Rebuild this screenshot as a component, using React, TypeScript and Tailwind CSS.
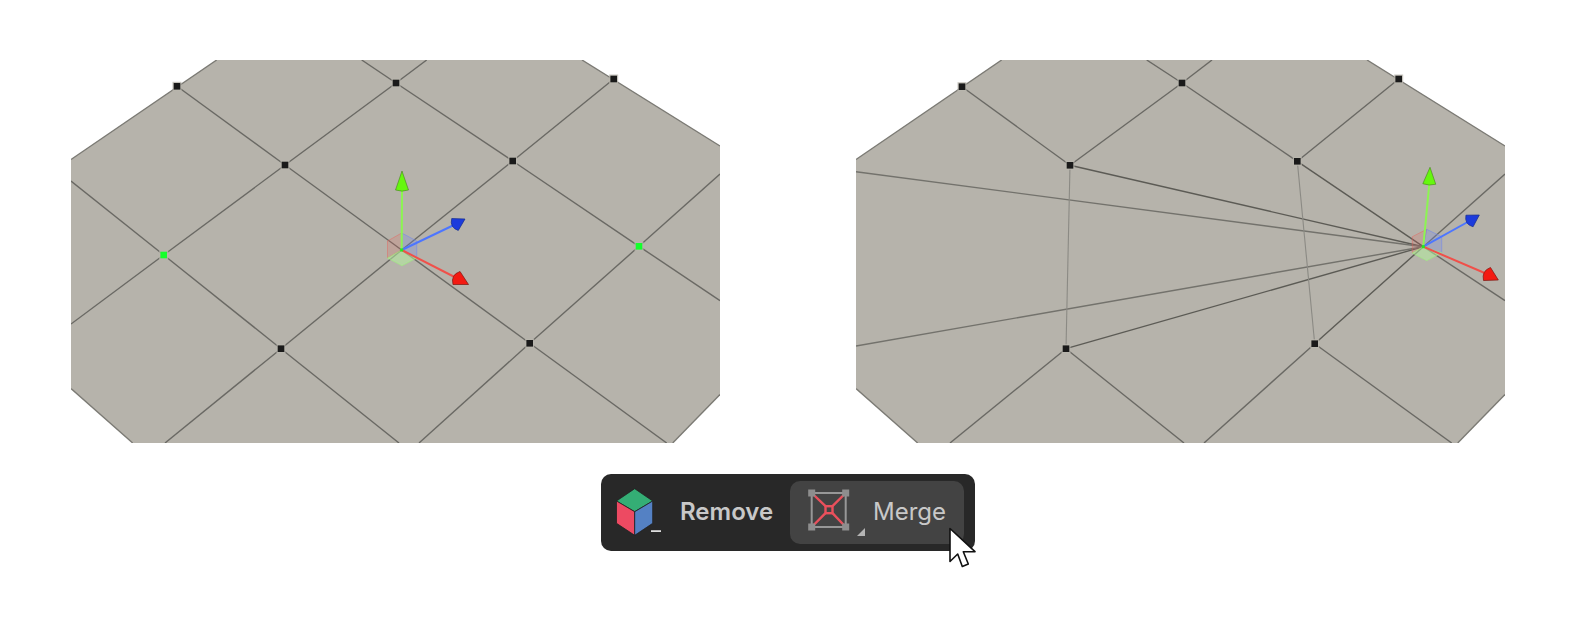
const EDGE = "#6a6964";

type Pt = [number, number];

function Edge({ a, b, color = EDGE, width = 1.4, opacity = 1 }: { a: Pt; b: Pt; color?: string; width?: number; opacity?: number }) {
  return <line x1={a[0]} y1={a[1]} x2={b[0]} y2={b[1]} stroke={color} strokeWidth={width} opacity={opacity} />;
}

function Vertex({ at, selected }: { at: Pt; selected?: boolean }) {
  return (
    <g>
      <rect x={at[0] - 4.5} y={at[1] - 4.5} width={9} height={9} fill="#b9b6ae" opacity={0.8} />
      <rect
        x={at[0] - 3.3}
        y={at[1] - 3.3}
        width={6.6}
        height={6.6}
        fill={selected ? "#14ff2c" : "#1a1a1a"}
      />
    </g>
  );
}

function Gizmo({
  origin,
  hex,
  green,
  blue,
  red,
}: {
  origin: Pt;
  hex: Pt[];
  green: { tip: Pt; base: Pt };
  blue: { tip: Pt; base: Pt };
  red: { tip: Pt; base: Pt };
}) {
  const [top, ul, ll, bottom, lr, ur] = hex;
  const quad = (pts: Pt[]) => pts.map((p) => p.join(",")).join(" ");
  const cone = (tip: Pt, base: Pt, r: number, bulge: number) => {
    const dx = tip[0] - base[0];
    const dy = tip[1] - base[1];
    const len = Math.hypot(dx, dy);
    const nx = (-dy / len) * r;
    const ny = (dx / len) * r;
    return `M${tip[0]} ${tip[1]} L${base[0] + nx} ${base[1] + ny} Q${base[0] - dx * bulge} ${base[1] - dy * bulge} ${base[0] - nx} ${base[1] - ny} Z`;
  };
  return (
    <g>
      <polygon points={quad([ul, top, origin, ll])} fill="#e8625c" fillOpacity={0.2} stroke="#e8625c" strokeOpacity={0.5} strokeWidth={0.9} />
      <polygon points={quad([top, ur, lr, origin])} fill="#6f86f0" fillOpacity={0.26} stroke="#6f86f0" strokeOpacity={0.6} strokeWidth={0.9} />
      <polygon points={quad([origin, lr, bottom, ll])} fill="#b4ee9e" fillOpacity={0.55} stroke="#9cf07c" strokeOpacity={0.7} strokeWidth={0.9} />
      <Edge a={origin} b={green.base} color="#8cf552" width={2} />
      <Edge a={origin} b={blue.base} color="#4d76ff" width={2} />
      <Edge a={origin} b={red.base} color="#f0504a" width={2} />
      <path d={cone(green.tip, green.base, 6.5, 0.12)} fill="#66f70f" stroke="#47801f" strokeWidth={0.6} />
      <path d={cone(blue.tip, blue.base, 6.8, 0.55)} fill="#1c3bdc" stroke="#122a8c" strokeWidth={0.7} />
      <path d={cone(red.tip, red.base, 7.4, 0.5)} fill="#f31a12" stroke="#7c1410" strokeWidth={0.7} />
      <rect x={origin[0] - 1.5} y={origin[1] - 1.5} width={3} height={3} fill="#25e81f" />
    </g>
  );
}

function MeshLeft() {
  const v1: Pt = [177, 86.3];
  const v2: Pt = [396, 83];
  const v3: Pt = [285, 165];
  const v4: Pt = [613.7, 79];
  const v5: Pt = [512.7, 161];
  const gl: Pt = [163.7, 255];
  const gr: Pt = [639, 246.3];
  const bl: Pt = [281, 348.7];
  const br: Pt = [529.7, 343.3];
  const c: Pt = [401.7, 250];
  return (
    <svg viewBox="71 60 649 383" className="block h-[383px] w-[649px] shrink-0">
      <polygon
        points="71,159.5 216.7,60 582,60 720,146 720,394.5 672.7,443 132.7,443 71,388.5"
        fill="#b6b3ab"
      />
      <Edge a={[71, 159.5]} b={[216.7, 60]} color="#7b7a74" />
      <Edge a={[582, 60]} b={[720, 146]} color="#7b7a74" />
      <Edge a={[720, 394.5]} b={[672.7, 443]} color="#7b7a74" />
      <Edge a={[132.7, 443]} b={[71, 388.5]} color="#7b7a74" />
      <Edge a={v1} b={v3} />
      <Edge a={v3} b={c} />
      <Edge a={c} b={br} />
      <Edge a={br} b={[666.7, 443]} />
      <Edge a={[361.7, 60]} b={v2} />
      <Edge a={v2} b={v5} />
      <Edge a={v5} b={gr} />
      <Edge a={gr} b={[720, 300.7]} />
      <Edge a={[71, 181]} b={gl} />
      <Edge a={gl} b={bl} />
      <Edge a={bl} b={[399, 443]} />
      <Edge a={[426.7, 60]} b={v2} />
      <Edge a={v2} b={v3} />
      <Edge a={v3} b={gl} />
      <Edge a={gl} b={[71, 324]} />
      <Edge a={v4} b={v5} />
      <Edge a={v5} b={c} />
      <Edge a={c} b={bl} />
      <Edge a={bl} b={[165, 443]} />
      <Edge a={[720, 174]} b={gr} />
      <Edge a={gr} b={br} />
      <Edge a={br} b={[419, 443]} />
      {[v1, v2, v3, v4, v5, bl, br].map((p) => (
        <Vertex key={p.join()} at={p} />
      ))}
      <Vertex at={gl} selected />
      <Vertex at={gr} selected />
      <Gizmo
        origin={c}
        hex={[[401.7, 233], [387.5, 241], [387.5, 258], [402, 265.7], [416.7, 258], [416.7, 241]]}
        green={{ tip: [402, 171], base: [402, 190] }}
        blue={{ tip: [465, 219], base: [455, 224.5] }}
        red={{ tip: [468.5, 284.5], base: [456.5, 278] }}
      />
    </svg>
  );
}

function MeshRight() {
  const v1: Pt = [962, 86.7];
  const v2: Pt = [1182, 83];
  const v3: Pt = [1070, 165.3];
  const v4: Pt = [1398.7, 79];
  const v5: Pt = [1297.3, 161.3];
  const bl: Pt = [1066, 348.7];
  const br: Pt = [1314.7, 343.7];
  const c: Pt = [1423.3, 246.7];
  return (
    <svg viewBox="856 60 649 383" className="block h-[383px] w-[649px] shrink-0">
      <polygon
        points="856,159.5 1001.7,60 1367,60 1505,146 1505,394.5 1457.7,443 917.7,443 856,388.5"
        fill="#b6b3ab"
      />
      <Edge a={[856, 159.5]} b={[1001.7, 60]} color="#7b7a74" />
      <Edge a={[1367, 60]} b={[1505, 146]} color="#7b7a74" />
      <Edge a={[1505, 394.5]} b={[1457.7, 443]} color="#7b7a74" />
      <Edge a={[917.7, 443]} b={[856, 388.5]} color="#7b7a74" />
      <Edge a={v1} b={v3} />
      <Edge a={[1146.7, 60]} b={v2} />
      <Edge a={v2} b={v5} />
      <Edge a={br} b={[1451.7, 443]} />
      <Edge a={bl} b={[1184, 443]} />
      <Edge a={[1212, 60]} b={v2} />
      <Edge a={v2} b={v3} />
      <Edge a={v4} b={v5} />
      <Edge a={bl} b={[950, 443]} />
      <Edge a={br} b={[1204, 443]} />
      <Edge a={c} b={[1505, 174]} />
      <Edge a={c} b={[1505, 300.7]} />
      <Edge a={v3} b={c} color="#5c5b55" />
      <Edge a={v5} b={c} color="#5c5b55" />
      <Edge a={bl} b={c} color="#5c5b55" />
      <Edge a={br} b={c} color="#5c5b55" />
      <Edge a={[856, 171.7]} b={c} color="#73726c" />
      <Edge a={[856, 346]} b={c} color="#73726c" />
      <Edge a={v3} b={bl} color="#8b8a84" width={1.1} />
      <Edge a={v5} b={br} color="#8b8a84" width={1.1} />
      {[v1, v2, v3, v4, v5, bl, br].map((p) => (
        <Vertex key={p.join()} at={p} />
      ))}
      <Gizmo
        origin={c}
        hex={[[1426.7, 229.3], [1412.3, 236.7], [1412.3, 253], [1426.7, 260.7], [1441.7, 252.7], [1441.7, 236.7]]}
        green={{ tip: [1430, 167.3], base: [1429.3, 184] }}
        blue={{ tip: [1479.3, 215], base: [1469.5, 221] }}
        red={{ tip: [1498.3, 280], base: [1487, 274] }}
      />
    </svg>
  );
}

function CubeIcon() {
  return (
    <svg width="46" height="48" viewBox="0 0 46 48" className="shrink-0">
      <polygon points="18.7,0.7 36.7,13 18.7,23.7 0.5,13" fill="#34ae75" stroke="#222" strokeWidth="0.8" />
      <polygon points="0.5,13 18.7,23.7 18.7,47.3 0.5,35.3" fill="#ed4a62" stroke="#222" strokeWidth="0.8" />
      <polygon points="36.7,13 18.7,23.7 18.7,47.3 36.7,35.3" fill="#5481c4" stroke="#222" strokeWidth="0.8" />
      <rect x="35" y="42.3" width="10" height="1.6" fill="#f2f2f2" />
    </svg>
  );
}

function MergeIcon() {
  return (
    <svg width="58" height="50" viewBox="0 0 58 50" className="shrink-0">
      <rect x="4.7" y="5" width="34" height="34" fill="none" stroke="#979797" strokeWidth="2" />
      <path d="M4.7 5 L18.5 18.2 M38.7 5 L25.5 18.2 M4.7 39 L18.5 25.2 M38.7 39 L25.5 25.2" stroke="#ea505c" strokeWidth="2.4" />
      <rect x="18.5" y="18.2" width="7" height="7" fill="#434343" stroke="#ea505c" strokeWidth="2.4" />
      <rect x="1.2" y="1.5" width="7" height="7" fill="#8e8e8e" />
      <rect x="35.2" y="1.5" width="7" height="7" fill="#8e8e8e" />
      <rect x="1.2" y="35.5" width="7" height="7" fill="#8e8e8e" />
      <rect x="35.2" y="35.5" width="7" height="7" fill="#8e8e8e" />
      <polygon points="58,40 58,48 50,48" fill="#b4b4b4" />
    </svg>
  );
}

export default function App() {
  return (
    <div className="h-[640px] w-[1576px] bg-white pt-[60px] font-['Inter',sans-serif]">
      <div className="flex justify-center gap-[136px]">
        <MeshLeft />
        <MeshRight />
      </div>

      <div className="relative mx-auto mt-[31px] flex h-[77px] w-[374px] items-center rounded-[10px] bg-[#282828] pl-[15px]">
        <div className="mb-[2px]">
          <CubeIcon />
        </div>
        <span className="mb-[2px] ml-[18px] w-[92px] text-[24px] font-semibold leading-none whitespace-nowrap text-[#c8c8c8]">
          Remove
        </span>
        <div className="ml-[18px] flex h-[63px] w-[174px] items-center rounded-[10px] bg-[#434343] pl-[17px]">
          <MergeIcon />
          <span className="mb-[2px] ml-[8px] text-[24px] leading-none whitespace-nowrap text-[#c8c8c8]">Merge</span>
        </div>
        <svg width="30" height="42" viewBox="0 0 30 42" className="absolute left-[348px] top-[53px]">
          <path
            d="M1 1.5 L1 34.5 L8.7 27 L13.3 39.5 L19.3 37 L14.3 24.7 L26 24.7 Z"
            fill="#fff"
            stroke="#111"
            strokeWidth="1.6"
            strokeLinejoin="round"
          />
        </svg>
      </div>
    </div>
  );
}
